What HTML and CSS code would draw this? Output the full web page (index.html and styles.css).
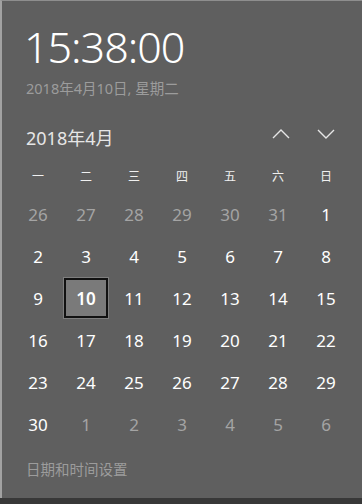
FILE: index.html
```html
<!DOCTYPE html>
<html lang="zh">
<head>
<meta charset="utf-8">
<link rel="stylesheet" href="styles.css">
</head>
<body>
<div class="panel">
  <div class="time">15:38:00</div>
  <div class="date">2018年4月10日, 星期二</div>
  <div class="header">
    <div class="month">2018年4月</div>
    <div class="arrows">
      <svg class="arrow" width="20" height="12" viewBox="0 0 20 12"><path d="M2 10 L10 2 L18 10" fill="none" stroke="#e6e6e6" stroke-width="1.4"/></svg>
      <svg class="arrow" width="20" height="12" viewBox="0 0 20 12"><path d="M2 2 L10 10 L18 2" fill="none" stroke="#e6e6e6" stroke-width="1.4"/></svg>
    </div>
  </div>
  <div class="grid">
    <div class="wd">一</div><div class="wd">二</div><div class="wd">三</div><div class="wd">四</div><div class="wd">五</div><div class="wd">六</div><div class="wd">日</div>
    <div class="d off">26</div><div class="d off">27</div><div class="d off">28</div><div class="d off">29</div><div class="d off">30</div><div class="d off">31</div><div class="d">1</div>
    <div class="d">2</div><div class="d">3</div><div class="d">4</div><div class="d">5</div><div class="d">6</div><div class="d">7</div><div class="d">8</div>
    <div class="d">9</div><div class="d sel"><span class="selbox">10</span></div><div class="d">11</div><div class="d">12</div><div class="d">13</div><div class="d">14</div><div class="d">15</div>
    <div class="d">16</div><div class="d">17</div><div class="d">18</div><div class="d">19</div><div class="d">20</div><div class="d">21</div><div class="d">22</div>
    <div class="d">23</div><div class="d">24</div><div class="d">25</div><div class="d">26</div><div class="d">27</div><div class="d">28</div><div class="d">29</div>
    <div class="d">30</div><div class="d off">1</div><div class="d off">2</div><div class="d off">3</div><div class="d off">4</div><div class="d off">5</div><div class="d off">6</div>
  </div>
  <div class="footer">日期和时间设置</div>
</div>
<div class="strip"></div>
</body>
</html>
```

FILE: styles.css
```css
html, body {
  margin: 0;
  padding: 0;
}
body {
  width: 362px;
  height: 504px;
  overflow: hidden;
  background: #5e5e5e;
  font-family: "Noto Sans", "Noto Sans CJK SC", sans-serif;
  color: #ffffff;
}
.panel {
  box-sizing: border-box;
  height: 498px;
  border-left: 2px solid #a2a2a2;
  border-top: 1px solid #8e8e8e;
  background: #5f5f5f;
  padding: 18px 0 0 0;
}
.time {
  font-family: "Noto Sans", sans-serif;
  font-weight: 300;
  font-size: 43px;
  line-height: 56px;
  padding-left: 22px;
  color: #ffffff;
  letter-spacing: -1px;
}
.date {
  margin-top: 3px;
  font-size: 14.5px;
  line-height: 20px;
  padding-left: 24px;
  color: #9c9c9c;
}
.header {
  margin-top: 19px;
  height: 40px;
  display: flex;
  align-items: center;
  justify-content: space-between;
  padding: 0 26px 0 24px;
}
.month {
  font-size: 18px;
  color: #e6e6e6;
}
.arrows {
  display: flex;
  gap: 25px;
  align-items: center;
  margin-top: -6px;
}
.arrow {
  display: block;
}
.grid {
  display: grid;
  grid-template-columns: repeat(7, 48px);
  grid-template-rows: 36px repeat(6, 42px);
  margin-left: 12px;
}
.wd {
  display: flex;
  align-items: center;
  justify-content: center;
  font-family: "Noto Sans CJK SC", sans-serif;
  font-size: 12px;
  color: #f0f0f0;
}
.d {
  display: flex;
  align-items: center;
  justify-content: center;
  font-size: 17px;
  color: #ffffff;
}
.d.off {
  color: #a4a4a4;
}
.selbox {
  box-sizing: border-box;
  width: 44px;
  height: 40px;
  display: flex;
  align-items: center;
  justify-content: center;
  border: 2px solid #111111;
  outline: 1px solid #7e7e7e;
  background: #7a7a7a;
  font-weight: 600;
}
.footer {
  margin-top: 14px;
  font-size: 14.5px;
  line-height: 20px;
  padding-left: 24px;
  color: #9c9c9c;
}
.strip {
  height: 6px;
  background: #383838;
}
```
